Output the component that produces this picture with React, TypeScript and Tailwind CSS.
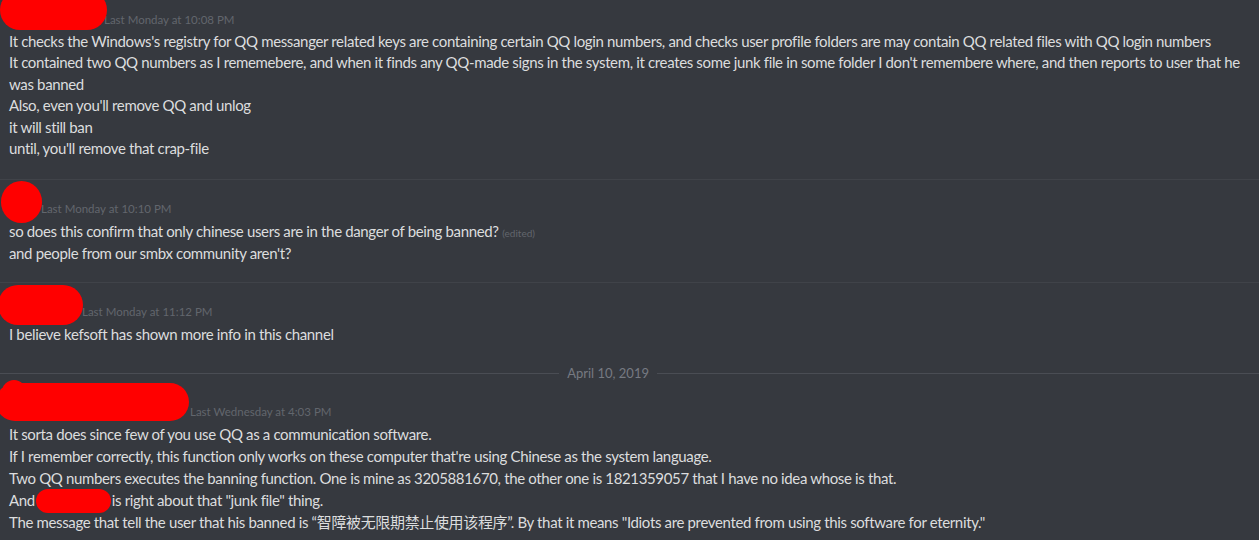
import type { ReactNode } from 'react';

// ─── Redaction scribbles (overlay the usernames) ─────────────────────────────

function Blob({ className }: { className: string }) {
  return <span className={'absolute bg-[#ff0000] ' + className} />;
}

function Header({ nameWidth, time, blob }: { nameWidth: string; time: string; blob: ReactNode }) {
  return (
    <div className="relative flex h-[22px] items-center">
      <span className={'relative shrink-0 self-stretch ' + nameWidth}>{blob}</span>
      <span className="text-[11.5px] leading-none tracking-normal text-[#62666d]">{time}</span>
    </div>
  );
}

function Line({ children, tight }: { children: ReactNode; tight?: boolean }) {
  return <div className={tight ? 'leading-[21.4px]' : 'leading-[22px]'}>{children}</div>;
}

export default function App() {
  return (
    <div className="h-[540px] w-[1259px] overflow-hidden bg-[#36393f] font-['Lato','Noto_Sans_CJK_SC',sans-serif] text-[15px] tracking-[-0.35px] text-[#dcddde]">
      {/* Message 1 */}
      <div className="pb-[19.6px] pl-[9px] pr-[10px] pt-[9px]">
        <Header
          nameWidth="w-[95px]"
          time="Last Monday at 10:08 PM"
          blob={<Blob className="-left-[9px] -top-[19px] h-[40px] w-[107px] rounded-[22px]" />}
        />
        <Line tight>
          It checks the Windows's registry for QQ messanger related keys are containing certain QQ login numbers, and
          checks user profile folders are may contain QQ related files with QQ login numbers
        </Line>
        <Line tight>
          It contained two QQ numbers as I rememebere, and when it finds any QQ-made signs in the system, it creates
          some junk file in some folder I don't remembere where, and then reports to user that he was banned
        </Line>
        <Line tight>Also, even you'll remove QQ and unlog</Line>
        <Line tight>it will still ban</Line>
        <Line tight>until, you'll remove that crap-file</Line>
      </div>

      {/* Message 2 */}
      <div className="border-t border-[#404349] pb-[18px] pl-[9px] pr-[10px] pt-[18px]">
        <Header
          nameWidth="w-[32px]"
          time="Last Monday at 10:10 PM"
          blob={<Blob className="-left-[8px] -top-[17px] h-[42px] w-[41px] rounded-full" />}
        />
        <Line>
          so does this confirm that only chinese users are in the danger of being banned?{' '}
          <span className="text-[10px] leading-none tracking-normal text-[#62666d]">(edited)</span>
        </Line>
        <Line>and people from our smbx community aren't?</Line>
      </div>

      {/* Message 3 */}
      <div className="border-t border-[#404349] pl-[9px] pr-[10px] pt-[18px]">
        <Header
          nameWidth="w-[73px]"
          time="Last Monday at 11:12 PM"
          blob={<Blob className="-left-[11px] -top-[16px] h-[40px] w-[85px] rounded-full" />}
        />
        <Line>I believe kefsoft has shown more info in this channel</Line>
      </div>

      {/* Date divider */}
      <div className="flex h-[56px] items-center">
        <div className="h-px flex-1 bg-[#4a4d54]" />
        <span className="px-[8px] text-[13px] leading-none tracking-normal text-[#767a82]">April 10, 2019</span>
        <div className="h-px w-[602px] bg-[#4a4d54]" />
      </div>

      {/* Message 4 */}
      <div className="pl-[9px] pr-[10px]">
        <Header
          nameWidth="w-[181px]"
          time="Last Wednesday at 4:03 PM"
          blob={
            <>
              <Blob className="-left-[13px] -top-[18px] h-[38px] w-[193px] rounded-full" />
              <Blob className="-left-[7px] -top-[21px] h-[24px] w-[24px] rounded-full" />
            </>
          }
        />
        <Line>It sorta does since few of you use QQ as a communication software.</Line>
        <Line>If I remember correctly, this function only works on these computer that're using Chinese as the system language.</Line>
        <Line>
          Two QQ numbers executes the banning function. One is mine as 3205881670, the other one is 1821359057 that I
          have no idea whose is that.
        </Line>
        <Line>
          And
          <span className="relative mx-[1px] inline-block h-[1px] w-[75px] align-middle">
            <span className="absolute -top-[13px] left-0 h-[24px] w-[75px] rounded-full bg-[#ff0000]" />
          </span>
          is right about that "junk file" thing.
        </Line>
        <Line>
          The message that tell the user that his banned is{' '}
          <span className="leading-none">“智障被无限期禁止使用该程序”</span>. By that it means "Idiots are prevented
          from using this software for eternity."
        </Line>
      </div>
    </div>
  );
}
